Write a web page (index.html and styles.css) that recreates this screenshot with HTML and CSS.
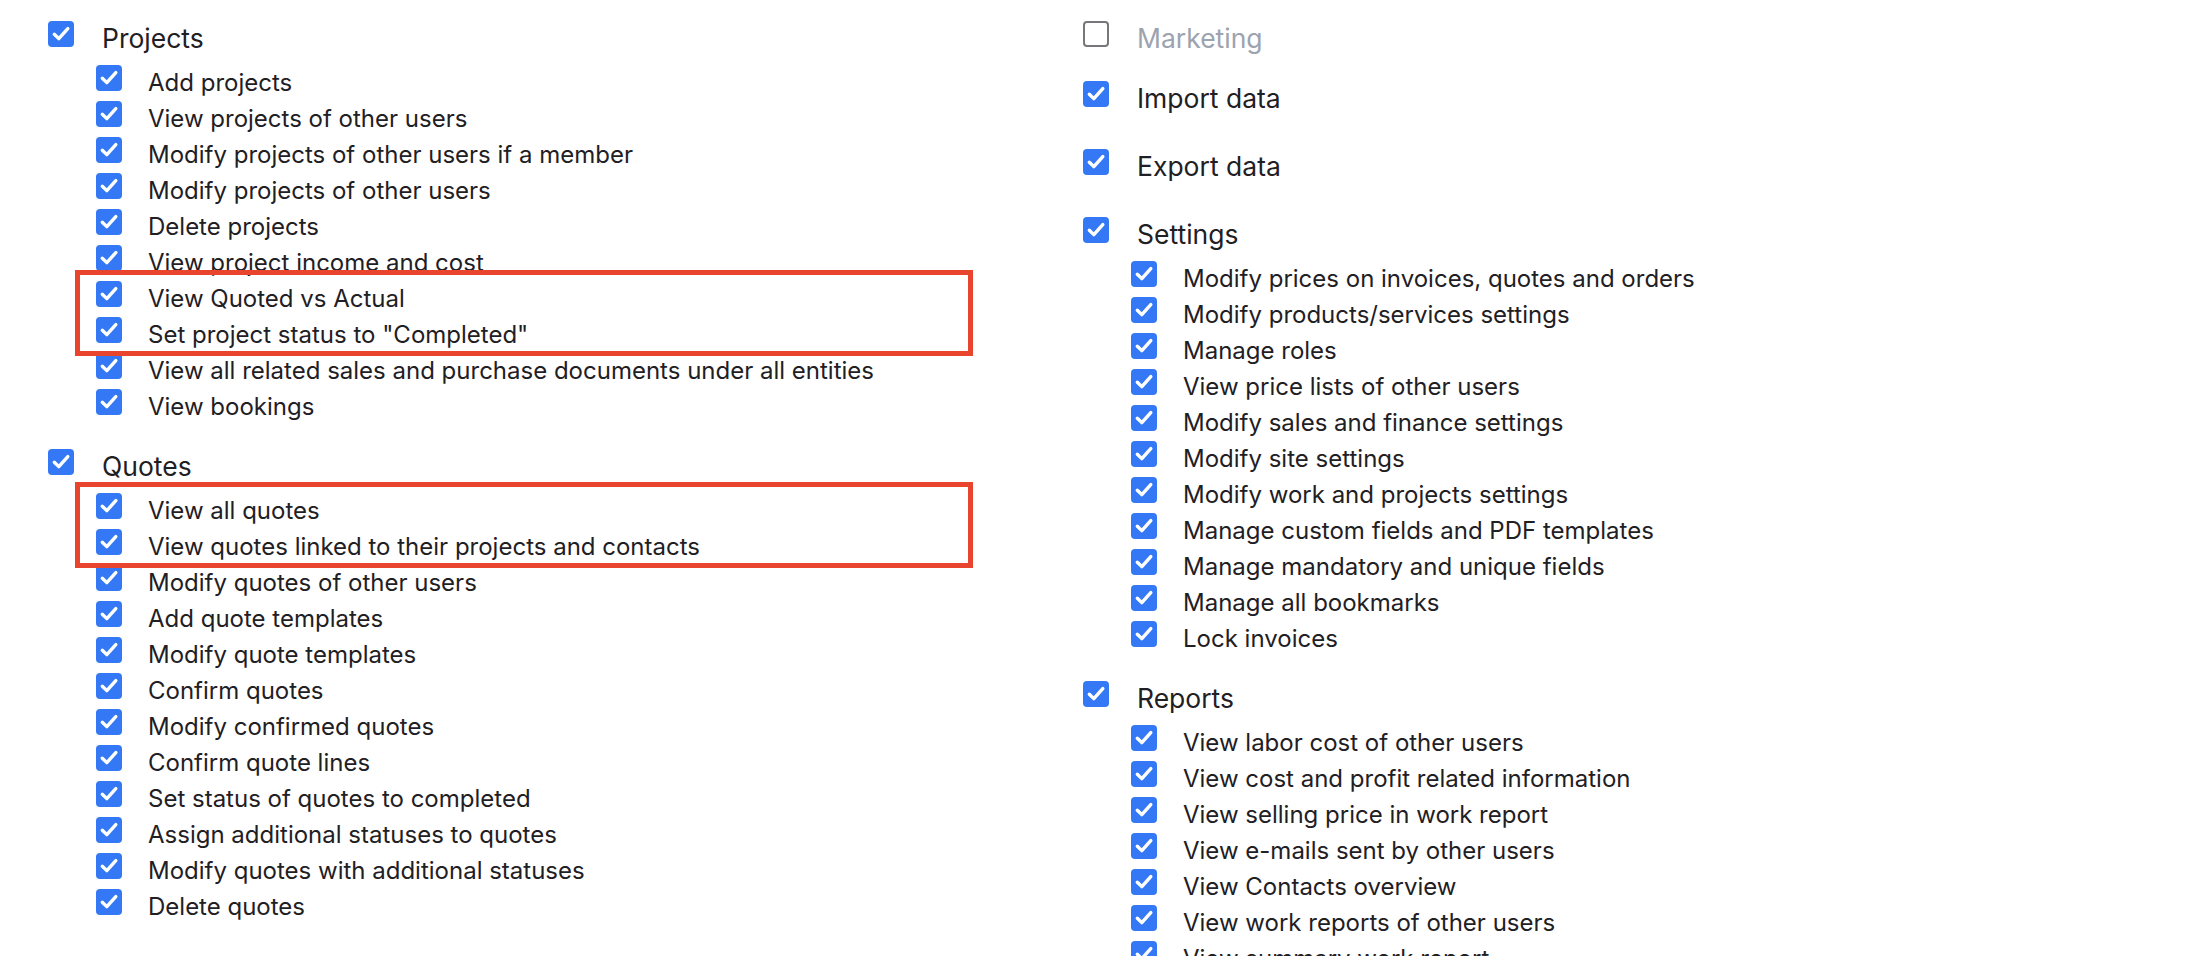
FILE: index.html
```html
<!DOCTYPE html>
<html lang="en">
<head>
    <meta charset="UTF-8">
    <meta name="viewport" content="width=device-width, initial-scale=1.0">
    <title>Role permissions</title>
    <link rel="stylesheet" href="styles.css">
</head>
<body>

<svg class="sprite" aria-hidden="true">
    <symbol id="tick" viewBox="0 0 26 26">
        <path d="M6.3 13.2 L10.8 17.6 L19.8 7.6" fill="none" stroke="#fff" stroke-width="3.4" stroke-linecap="round" stroke-linejoin="round"/>
    </symbol>
</svg>

<div class="permissions">
    <div class="column">
        <section class="group">
            <div class="group-head"><span class="check"><svg><use href="#tick"/></svg></span>Projects</div>
            <ul class="perms">
                <li class="perm"><span class="check"><svg><use href="#tick"/></svg></span>Add projects</li>
                <li class="perm"><span class="check"><svg><use href="#tick"/></svg></span>View projects of other users</li>
                <li class="perm"><span class="check"><svg><use href="#tick"/></svg></span>Modify projects of other users if a member</li>
                <li class="perm"><span class="check"><svg><use href="#tick"/></svg></span>Modify projects of other users</li>
                <li class="perm"><span class="check"><svg><use href="#tick"/></svg></span>Delete projects</li>
                <li class="perm"><span class="check"><svg><use href="#tick"/></svg></span>View project income and cost</li>
                <div class="highlight">
                    <li class="perm"><span class="check"><svg><use href="#tick"/></svg></span>View Quoted vs Actual</li>
                    <li class="perm"><span class="check"><svg><use href="#tick"/></svg></span>Set project status to "Completed"</li>
                </div>
                <li class="perm"><span class="check"><svg><use href="#tick"/></svg></span>View all related sales and purchase documents under all entities</li>
                <li class="perm"><span class="check"><svg><use href="#tick"/></svg></span>View bookings</li>
            </ul>
        </section>

        <section class="group">
            <div class="group-head"><span class="check"><svg><use href="#tick"/></svg></span>Quotes</div>
            <ul class="perms">
                <div class="highlight">
                    <li class="perm"><span class="check"><svg><use href="#tick"/></svg></span>View all quotes</li>
                    <li class="perm"><span class="check"><svg><use href="#tick"/></svg></span>View quotes linked to their projects and contacts</li>
                </div>
                <li class="perm"><span class="check"><svg><use href="#tick"/></svg></span>Modify quotes of other users</li>
                <li class="perm"><span class="check"><svg><use href="#tick"/></svg></span>Add quote templates</li>
                <li class="perm"><span class="check"><svg><use href="#tick"/></svg></span>Modify quote templates</li>
                <li class="perm"><span class="check"><svg><use href="#tick"/></svg></span>Confirm quotes</li>
                <li class="perm"><span class="check"><svg><use href="#tick"/></svg></span>Modify confirmed quotes</li>
                <li class="perm"><span class="check"><svg><use href="#tick"/></svg></span>Confirm quote lines</li>
                <li class="perm"><span class="check"><svg><use href="#tick"/></svg></span>Set status of quotes to completed</li>
                <li class="perm"><span class="check"><svg><use href="#tick"/></svg></span>Assign additional statuses to quotes</li>
                <li class="perm"><span class="check"><svg><use href="#tick"/></svg></span>Modify quotes with additional statuses</li>
                <li class="perm"><span class="check"><svg><use href="#tick"/></svg></span>Delete quotes</li>
            </ul>
        </section>
    </div>

    <div class="column">
        <section class="group">
            <div class="group-head is-off"><span class="check off"></span>Marketing</div>
        </section>

        <section class="group">
            <div class="group-head"><span class="check"><svg><use href="#tick"/></svg></span>Import data</div>
        </section>

        <section class="group">
            <div class="group-head"><span class="check"><svg><use href="#tick"/></svg></span>Export data</div>
        </section>

        <section class="group">
            <div class="group-head"><span class="check"><svg><use href="#tick"/></svg></span>Settings</div>
            <ul class="perms">
                <li class="perm"><span class="check"><svg><use href="#tick"/></svg></span>Modify prices on invoices, quotes and orders</li>
                <li class="perm"><span class="check"><svg><use href="#tick"/></svg></span>Modify products/services settings</li>
                <li class="perm"><span class="check"><svg><use href="#tick"/></svg></span>Manage roles</li>
                <li class="perm"><span class="check"><svg><use href="#tick"/></svg></span>View price lists of other users</li>
                <li class="perm"><span class="check"><svg><use href="#tick"/></svg></span>Modify sales and finance settings</li>
                <li class="perm"><span class="check"><svg><use href="#tick"/></svg></span>Modify site settings</li>
                <li class="perm"><span class="check"><svg><use href="#tick"/></svg></span>Modify work and projects settings</li>
                <li class="perm"><span class="check"><svg><use href="#tick"/></svg></span>Manage custom fields and PDF templates</li>
                <li class="perm"><span class="check"><svg><use href="#tick"/></svg></span>Manage mandatory and unique fields</li>
                <li class="perm"><span class="check"><svg><use href="#tick"/></svg></span>Manage all bookmarks</li>
                <li class="perm"><span class="check"><svg><use href="#tick"/></svg></span>Lock invoices</li>
            </ul>
        </section>

        <section class="group">
            <div class="group-head"><span class="check"><svg><use href="#tick"/></svg></span>Reports</div>
            <ul class="perms">
                <li class="perm"><span class="check"><svg><use href="#tick"/></svg></span>View labor cost of other users</li>
                <li class="perm"><span class="check"><svg><use href="#tick"/></svg></span>View cost and profit related information</li>
                <li class="perm"><span class="check"><svg><use href="#tick"/></svg></span>View selling price in work report</li>
                <li class="perm"><span class="check"><svg><use href="#tick"/></svg></span>View e-mails sent by other users</li>
                <li class="perm"><span class="check"><svg><use href="#tick"/></svg></span>View Contacts overview</li>
                <li class="perm"><span class="check"><svg><use href="#tick"/></svg></span>View work reports of other users</li>
                <li class="perm"><span class="check"><svg><use href="#tick"/></svg></span>View summary work report</li>
            </ul>
        </section>
    </div>
</div>

</body>
</html>
```

FILE: styles.css
```css
* {
    margin: 0;
    padding: 0;
    box-sizing: border-box;
}

body {
    font-family: Inter, "Noto Sans", sans-serif;
    color: #1f2024;
    background-color: #fff;
    overflow: hidden;
}

.sprite {
    display: none;
}

.permissions {
    display: grid;
    grid-template-columns: 1035px 1fr;
    padding: 21px 0 0 48px;
}

.group {
    margin-bottom: 24px;
}

.group-head {
    display: flex;
    height: 44px;
    font-size: 26.5px;
    line-height: 35px;
}

.group-head.is-off {
    height: 36px;
    color: #9ca3af;
}

.group-head .check {
    margin-right: 28px;
}

.perms {
    list-style: none;
    padding-left: 48px;
}

.perm {
    display: flex;
    height: 36px;
    font-size: 24px;
    line-height: 36px;
    white-space: nowrap;
}

.perm .check {
    margin-right: 26px;
}

.check {
    flex: none;
    width: 26px;
    height: 26px;
    border-radius: 4px;
    background-color: #3478f6;
}

.check svg {
    display: block;
    width: 26px;
    height: 26px;
}

.check.off {
    background-color: #fff;
    border: 2px solid #77777b;
}

.highlight {
    position: relative;
}

.highlight::before {
    content: "";
    position: absolute;
    left: -21px;
    top: -11px;
    bottom: -3px;
    width: 898px;
    box-sizing: border-box;
    border: 5px solid #e9442d;
    pointer-events: none;
}
```
